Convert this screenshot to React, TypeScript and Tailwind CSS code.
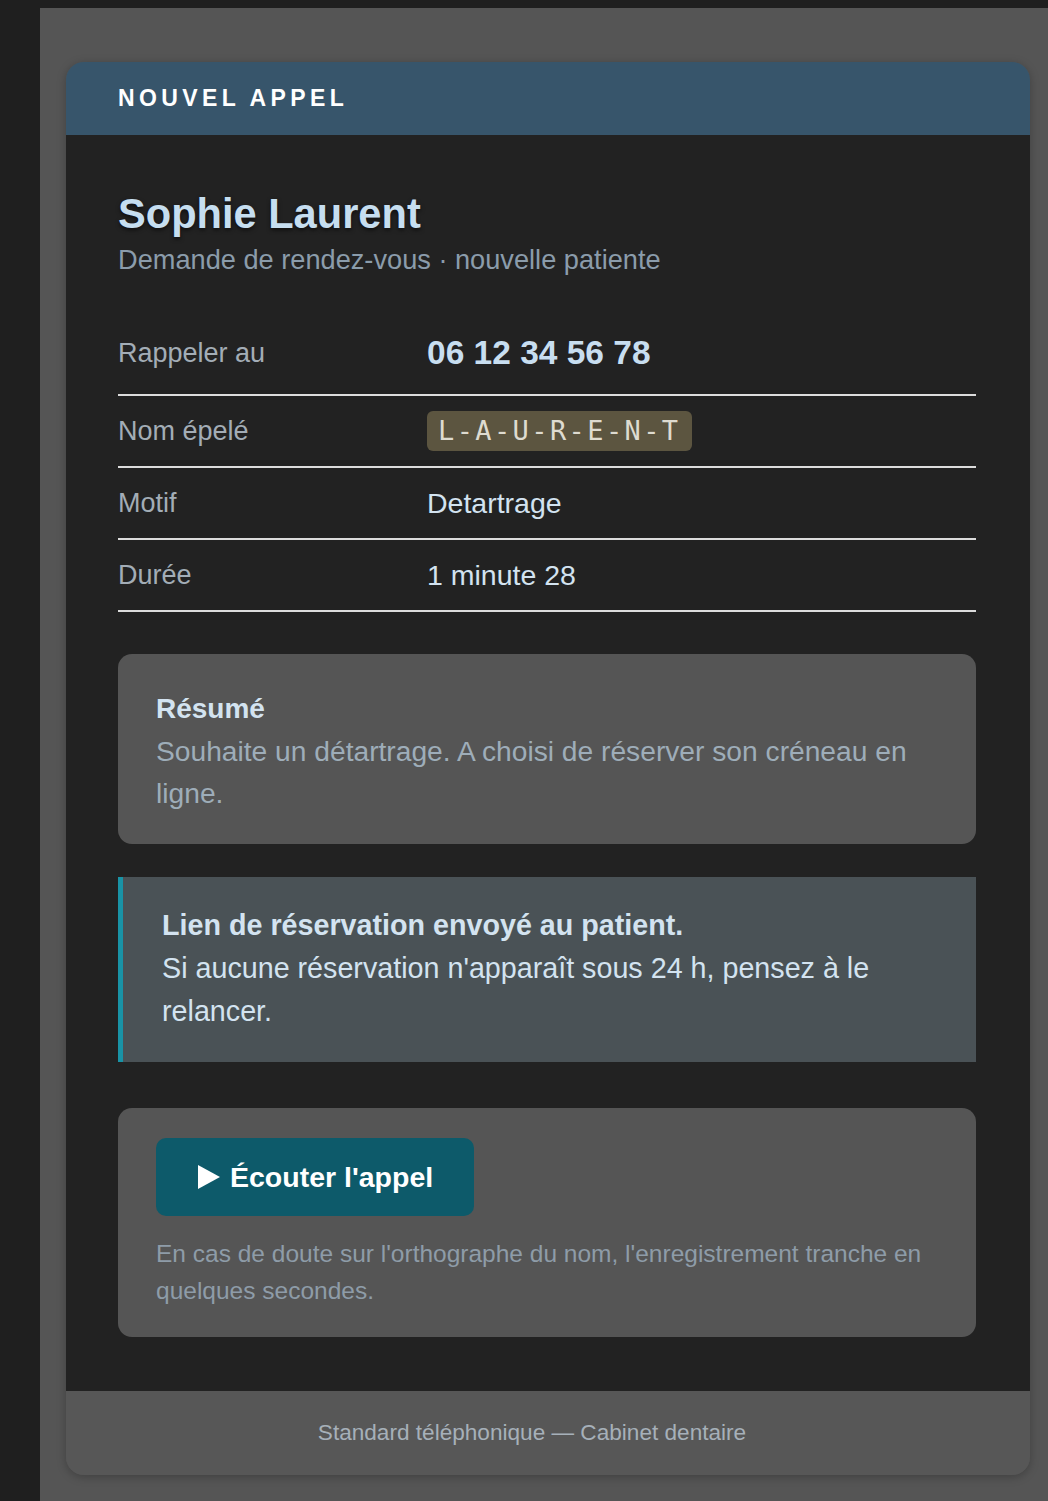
import React from 'react';

const rows = [
  { label: 'Rappeler au', kind: 'phone', value: '06 12 34 56 78' },
  { label: 'Nom épelé', kind: 'spell', value: 'L-A-U-R-E-N-T' },
  { label: 'Motif', kind: 'text', value: 'Detartrage' },
  { label: 'Durée', kind: 'text', value: '1 minute 28' },
];

const Row: React.FC<{ label: string; kind: string; value: string }> = ({ label, kind, value }) => {
  return (
    <div
      className={`flex items-center border-b-2 border-[#dcdcdc] ${kind === 'phone' ? 'h-[84px]' : 'h-[72px]'}`}
    >
      <div className="w-[309px] shrink-0 text-[27px] text-[#a3adb6]">{label}</div>
      {kind === 'phone' && <div className="text-[33.5px] font-bold text-[#c8def0]">{value}</div>}
      {kind === 'spell' && (
        <div className="h-[40px] flex items-center px-[11px] rounded-[6px] bg-[#5c5540] text-[#dedbd0] text-[27px] tracking-[2.4px] font-['DejaVu_Sans_Mono',monospace]">
          {value}
        </div>
      )}
      {kind === 'text' && <div className="text-[28.5px] text-[#d3e3f0]">{value}</div>}
    </div>
  );
};

export default function App() {
  return (
    <div className="min-h-[1501px] bg-[#1f1f1f] pt-[8px] pl-[40px] font-['Liberation_Sans',Arial,sans-serif]">
      <div className="min-h-[1493px] bg-[#555555] pt-[54px] pl-[26px] pr-[18px] pb-[26px]">
        {/* Card */}
        <div className="rounded-[18px] overflow-hidden shadow-[0_2px_10px_rgba(0,0,0,0.25)]">
          {/* Header */}
          <div className="h-[73px] bg-[#37556b] flex items-center px-[52px]">
            <span className="text-[23px] font-bold text-white tracking-[0.19em]">NOUVEL APPEL</span>
          </div>

          {/* Body */}
          <div className="bg-[#222222] px-[52px] pt-[54px] pb-[54px] pr-[54px]">
            <h1 className="text-[41.6px] leading-[50px] font-bold text-[#c6def0] [text-shadow:0_2px_4px_rgba(0,0,0,0.6)]">
              Sophie Laurent
            </h1>
            <p className="text-[27.2px] leading-[34px] text-[#8b9cab] mt-[4px]">
              Demande de rendez-vous · nouvelle patiente
            </p>

            <div className="mt-[35px]">
              {rows.map((r) => (
                <Row key={r.label} label={r.label} kind={r.kind} value={r.value} />
              ))}
            </div>

            {/* Résumé */}
            <div className="mt-[42px] rounded-[14px] bg-[#555555] px-[38px] pt-[34px] pb-[30px]">
              <div className="text-[28px] leading-[42px] font-bold text-[#d3e3f0]">Résumé</div>
              <p className="text-[28.2px] leading-[42px] text-[#9eadb9]">
                Souhaite un détartrage. A choisi de réserver son créneau en ligne.
              </p>
            </div>

            {/* Notice */}
            <div className="mt-[33px] bg-[#4a5256] border-l-[5px] border-[#1993a6] pl-[39px] pr-[40px] pt-[27px] pb-[29px]">
              <div className="text-[28.7px] leading-[43px] font-bold text-[#d3e3f0]">
                Lien de réservation envoyé au patient.
              </div>
              <p className="text-[28.7px] leading-[43px] text-[#d3e3f0]">
                Si aucune réservation n'apparaît sous 24 h, pensez à le relancer.
              </p>
            </div>

            {/* Audio */}
            <div className="mt-[46px] rounded-[14px] bg-[#555555] px-[38px] pt-[30px] pb-[28px]">
              <button className="h-[78px] w-[318px] rounded-[10px] bg-[#0d5a6a] flex items-center pl-[42px] gap-[10px] text-white">
                <svg width="22" height="24" viewBox="0 0 22 24">
                  <path d="M0 0 L22 12 L0 24 Z" fill="white" />
                </svg>
                <span className="text-[28.5px] font-bold">Écouter l'appel</span>
              </button>
              <p className="mt-[19px] text-[24.5px] leading-[37px] text-[#8e9ca8]">
                En cas de doute sur l'orthographe du nom, l'enregistrement tranche en quelques secondes.
              </p>
            </div>
          </div>

          {/* Footer */}
          <div className="h-[84px] bg-[#575757] flex items-center justify-center pr-[32px]">
            <span className="text-[22.6px] text-[#a6b0b9]">Standard téléphonique — Cabinet dentaire</span>
          </div>
        </div>
      </div>
    </div>
  );
}
